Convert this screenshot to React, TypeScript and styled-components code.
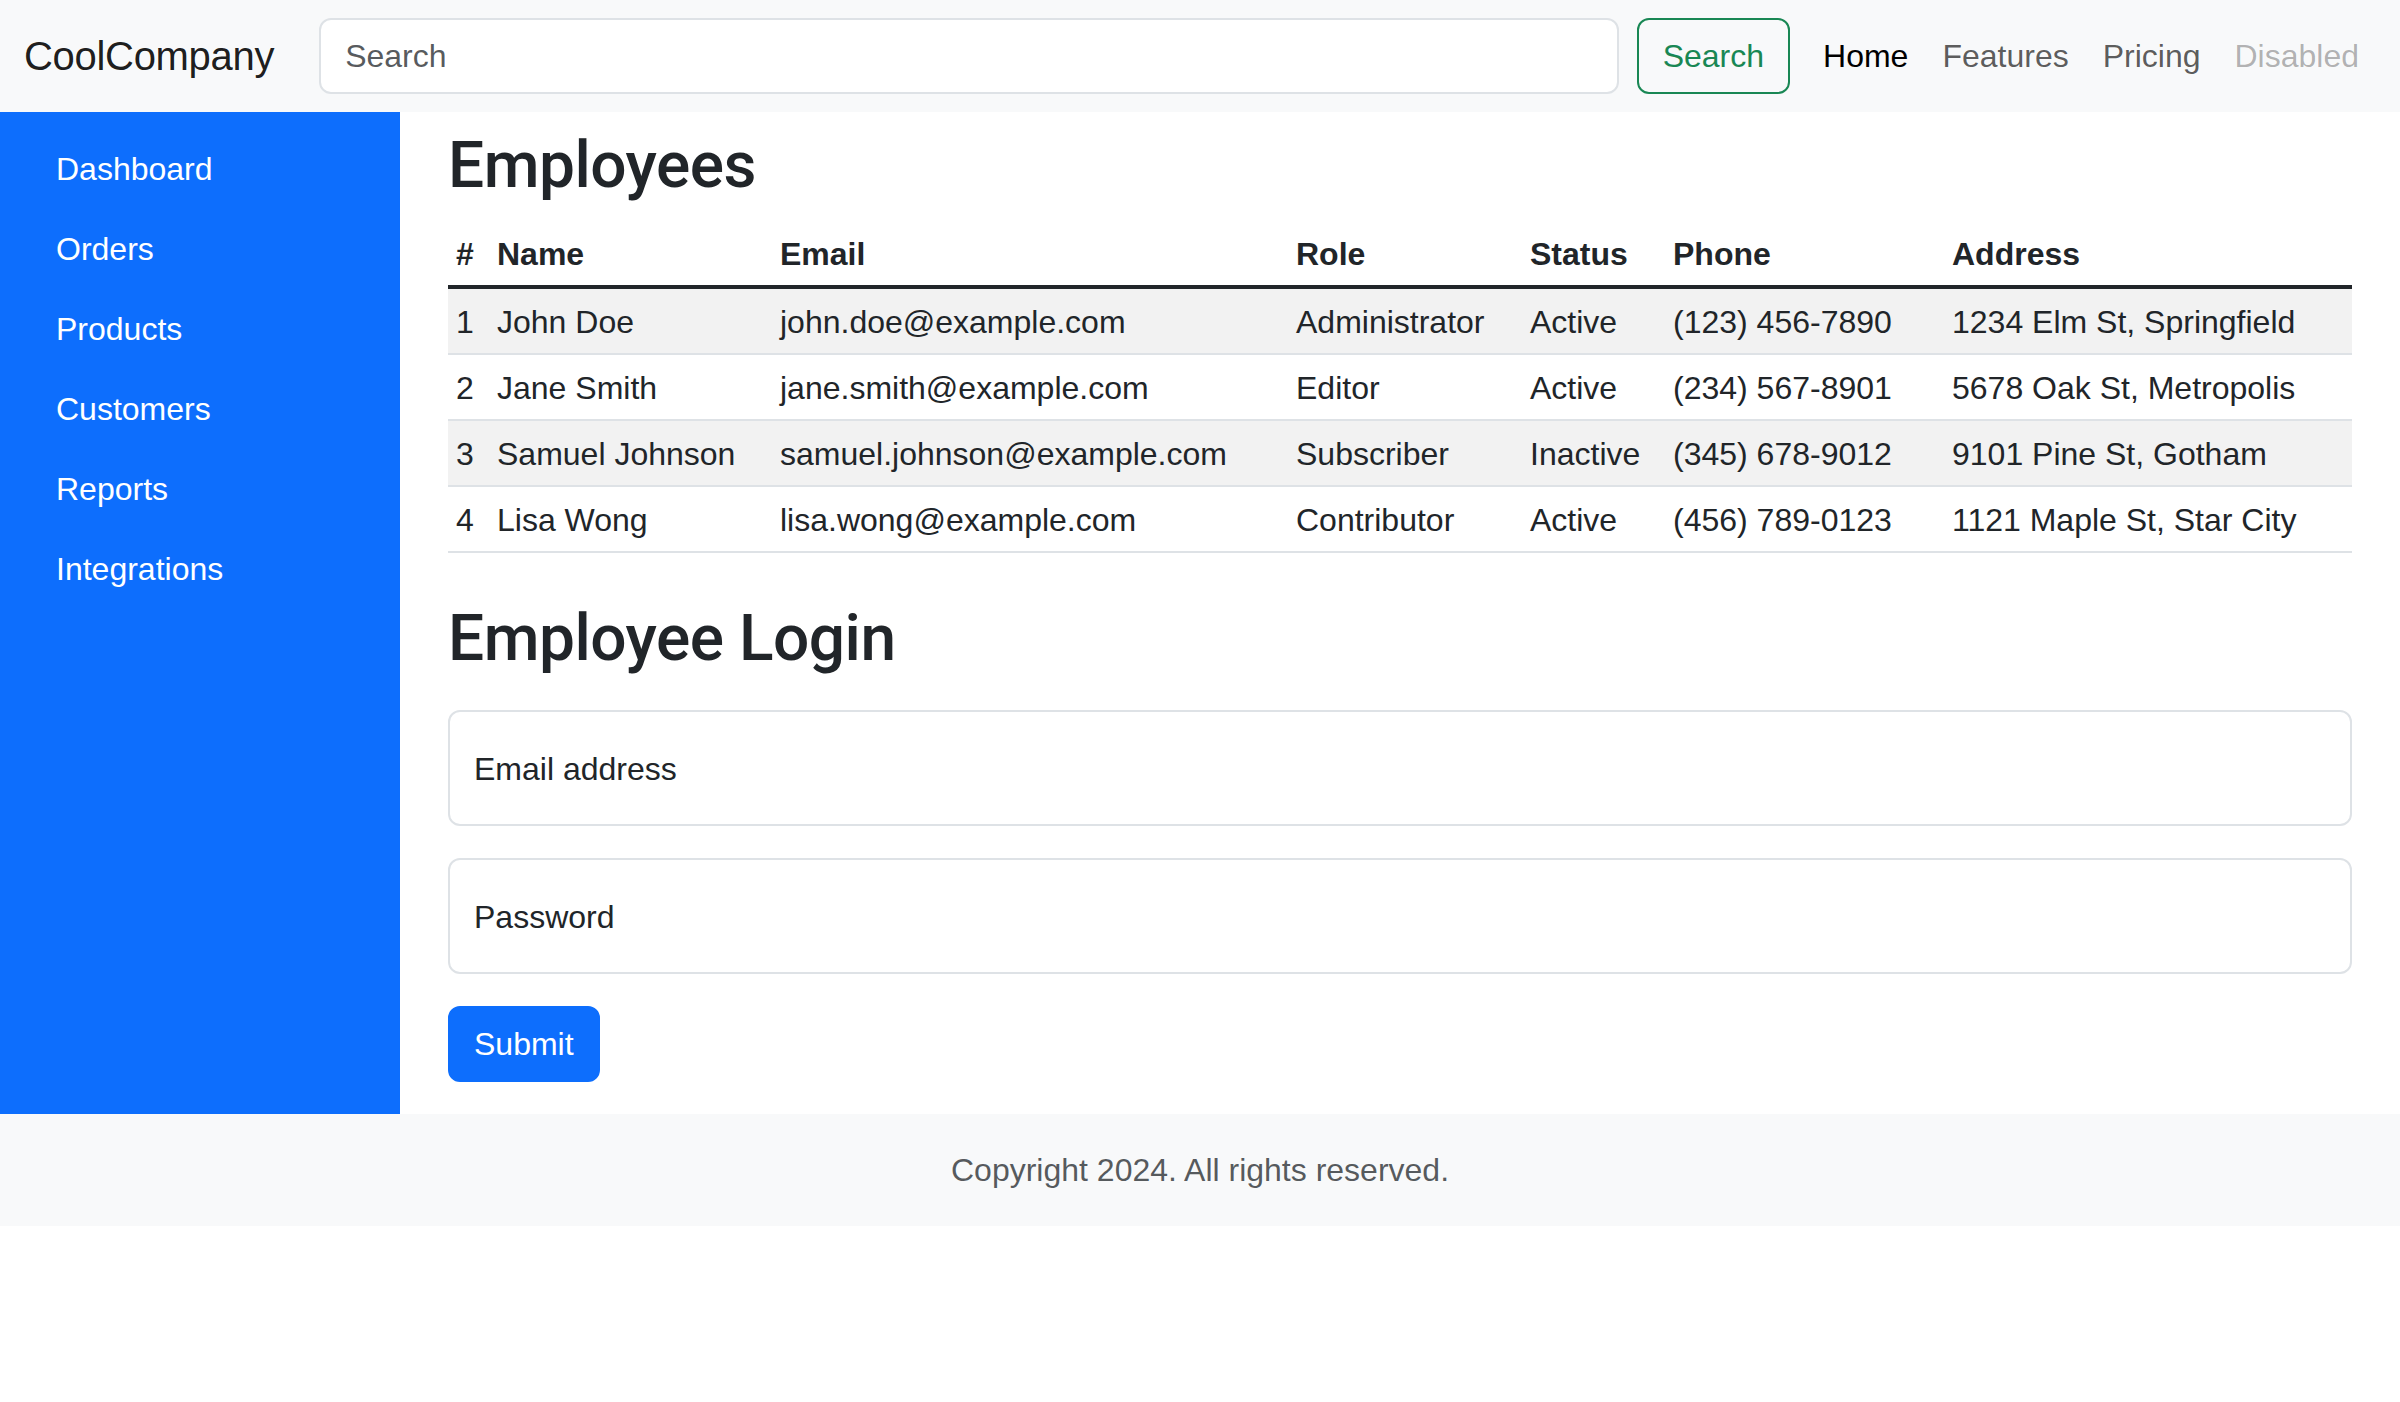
import styled, { createGlobalStyle } from "styled-components";

const GlobalStyle = createGlobalStyle`
  *, *::before, *::after {
    box-sizing: border-box;
  }
  body {
    margin: 0;
    font-family: "Liberation Sans", Arial, sans-serif;
    font-size: 32px;
    line-height: 1.5;
    color: #212529;
    background-color: #fff;
  }
`;

interface IEmployee {
  id: number;
  name: string;
  email: string;
  role: string;
  status: string;
  phone: string;
  address: string;
}

const employees: IEmployee[] = [
  {
    id: 1,
    name: "John Doe",
    email: "john.doe@example.com",
    role: "Administrator",
    status: "Active",
    phone: "(123) 456-7890",
    address: "1234 Elm St, Springfield",
  },
  {
    id: 2,
    name: "Jane Smith",
    email: "jane.smith@example.com",
    role: "Editor",
    status: "Active",
    phone: "(234) 567-8901",
    address: "5678 Oak St, Metropolis",
  },
  {
    id: 3,
    name: "Samuel Johnson",
    email: "samuel.johnson@example.com",
    role: "Subscriber",
    status: "Inactive",
    phone: "(345) 678-9012",
    address: "9101 Pine St, Gotham",
  },
  {
    id: 4,
    name: "Lisa Wong",
    email: "lisa.wong@example.com",
    role: "Contributor",
    status: "Active",
    phone: "(456) 789-0123",
    address: "1121 Maple St, Star City",
  },
];

// column widths follow the reference layout
const columns = [
  { label: "#", width: 41 },
  { label: "Name", width: 283 },
  { label: "Email", width: 516 },
  { label: "Role", width: 234 },
  { label: "Status", width: 143 },
  { label: "Phone", width: 279 },
  { label: "Address", width: 408 },
];

const sideLinks = [
  "Dashboard",
  "Orders",
  "Products",
  "Customers",
  "Reports",
  "Integrations",
];

type LinkState = "active" | "normal" | "disabled";

const navLinks: { label: string; state: LinkState }[] = [
  { label: "Home", state: "active" },
  { label: "Features", state: "normal" },
  { label: "Pricing", state: "normal" },
  { label: "Disabled", state: "disabled" },
];

const Page = styled.div`
  display: flex;
  flex-direction: column;
`;

const Navbar = styled.nav`
  display: flex;
  align-items: center;
  height: 112px;
  padding: 0 24px 0 24px;
  background-color: #f8f9fa;
`;

const Brand = styled.a`
  font-size: 40px;
  line-height: 60px;
  padding: 10px 0;
  margin-right: 45px;
  color: rgba(0, 0, 0, 0.9);
  text-decoration: none;
  white-space: nowrap;
  letter-spacing: -0.3px;
`;

const SearchForm = styled.form`
  display: flex;
  flex: 1;
  margin: 0 16px 0 0;
`;

const SearchInput = styled.input`
  flex: 1;
  min-width: 0;
  height: 76px;
  margin-right: 18px;
  padding: 12px 24px;
  font-family: inherit;
  font-size: 32px;
  color: #212529;
  background-color: #fff;
  border: 2px solid #dee2e6;
  border-radius: 12px;
  outline: none;

  &::placeholder {
    color: rgba(33, 37, 41, 0.75);
  }
`;

const OutlineButton = styled.button`
  height: 76px;
  padding: 12px 24px;
  font-family: inherit;
  font-size: 32px;
  line-height: 48px;
  color: #198754;
  background: transparent;
  border: 2px solid #198754;
  border-radius: 12px;
  cursor: pointer;
`;

const NavList = styled.ul`
  display: flex;
  margin: 0;
  padding: 0;
  list-style: none;
`;

const NavLink = styled.a<{ $state: LinkState }>`
  display: block;
  padding: 16px 17px;
  line-height: 48px;
  text-decoration: none;
  color: ${(p) =>
    p.$state === "active"
      ? "rgba(0, 0, 0, 1)"
      : p.$state === "disabled"
      ? "rgba(0, 0, 0, 0.3)"
      : "rgba(0, 0, 0, 0.65)"};
`;

const Body = styled.div`
  display: flex;
`;

const Sidebar = styled.aside`
  width: 400px;
  flex-shrink: 0;
  padding: 16px 24px;
  background-color: #0d6efd;
`;

const SideNav = styled.ul`
  display: flex;
  flex-direction: column;
  margin: 0;
  padding: 0;
  list-style: none;
`;

const SideLink = styled.a`
  display: block;
  padding: 17px 32px 15px;
  line-height: 48px;
  color: #fff;
  text-decoration: none;
`;

const Main = styled.main`
  flex: 1;
  min-width: 0;
  padding: 16px 48px 32px;
`;

const Title = styled.h2<{ $top?: number; $bottom?: number }>`
  margin: ${(p) => p.$top ?? 0}px 0 ${(p) => p.$bottom ?? 16}px;
  font-family: Roboto, "Liberation Sans", sans-serif;
  font-weight: 500;
  font-size: 64px;
  line-height: 1.2;
  letter-spacing: -0.5px;
  color: #212529;
`;

const Table = styled.table`
  width: 100%;
  margin-bottom: 32px;
  border-collapse: collapse;
  table-layout: fixed;
`;

const Col = styled.col<{ $width: number }>`
  width: ${(p) => p.$width}px;
`;

const Th = styled.th`
  padding: 9px 8px 7px;
  text-align: left;
  font-weight: 700;
  line-height: 48px;
  white-space: nowrap;
  border-bottom: 4px solid #212529;
`;

const Row = styled.tr<{ $striped: boolean }>`
  background-color: ${(p) => (p.$striped ? "#f2f2f2" : "#fff")};
`;

const Td = styled.td`
  padding: 9px 8px 7px;
  line-height: 48px;
  white-space: nowrap;
  border-bottom: 2px solid #dee2e6;
`;

const LoginForm = styled.form`
  display: flex;
  flex-direction: column;
  align-items: flex-start;
`;

const FloatingField = styled.div`
  position: relative;
  width: 100%;
  margin-bottom: 32px;
`;

const FieldInput = styled.input`
  display: block;
  width: 100%;
  height: 116px;
  padding: 32px 24px;
  font-family: inherit;
  font-size: 32px;
  color: #212529;
  background-color: #fff;
  border: 2px solid #dee2e6;
  border-radius: 12px;
  outline: none;
`;

const FieldLabel = styled.label`
  position: absolute;
  top: 0;
  left: 0;
  padding: 35px 26px 33px;
  line-height: 48px;
  color: #212529;
  pointer-events: none;
`;

const SubmitButton = styled.button`
  padding: 12px 24px;
  font-family: inherit;
  font-size: 32px;
  line-height: 48px;
  color: #fff;
  background-color: #0d6efd;
  border: 2px solid #0d6efd;
  border-radius: 12px;
  cursor: pointer;
`;

const Footer = styled.footer`
  padding: 32px 0;
  line-height: 48px;
  text-align: center;
  color: rgba(33, 37, 41, 0.75);
  background-color: #f8f9fa;
`;

function App() {
  return (
    <>
      <GlobalStyle />
      <Page>
        <Navbar>
          <Brand href="#">CoolCompany</Brand>
          <SearchForm onSubmit={(e) => e.preventDefault()}>
            <SearchInput type="search" placeholder="Search" />
            <OutlineButton type="submit">Search</OutlineButton>
          </SearchForm>
          <NavList>
            {navLinks.map((link) => (
              <li key={link.label}>
                <NavLink href="#" $state={link.state}>
                  {link.label}
                </NavLink>
              </li>
            ))}
          </NavList>
        </Navbar>

        <Body>
          <Sidebar>
            <SideNav>
              {sideLinks.map((label) => (
                <li key={label}>
                  <SideLink href="#">{label}</SideLink>
                </li>
              ))}
            </SideNav>
          </Sidebar>

          <Main>
            <Title>Employees</Title>
            <Table>
              <colgroup>
                {columns.map((c) => (
                  <Col key={c.label} $width={c.width} />
                ))}
              </colgroup>
              <thead>
                <tr>
                  {columns.map((c) => (
                    <Th key={c.label}>{c.label}</Th>
                  ))}
                </tr>
              </thead>
              <tbody>
                {employees.map((emp, i) => (
                  <Row key={emp.id} $striped={i % 2 === 0}>
                    <Td>{emp.id}</Td>
                    <Td>{emp.name}</Td>
                    <Td>{emp.email}</Td>
                    <Td>{emp.role}</Td>
                    <Td>{emp.status}</Td>
                    <Td>{emp.phone}</Td>
                    <Td>{emp.address}</Td>
                  </Row>
                ))}
              </tbody>
            </Table>

            <Title $top={48} $bottom={32}>
              Employee Login
            </Title>
            <LoginForm onSubmit={(e) => e.preventDefault()}>
              <FloatingField>
                <FieldInput type="email" id="email" />
                <FieldLabel htmlFor="email">Email address</FieldLabel>
              </FloatingField>
              <FloatingField>
                <FieldInput type="password" id="password" />
                <FieldLabel htmlFor="password">Password</FieldLabel>
              </FloatingField>
              <SubmitButton type="submit">Submit</SubmitButton>
            </LoginForm>
          </Main>
        </Body>

        <Footer>Copyright 2024. All rights reserved.</Footer>
      </Page>
    </>
  );
}

export default App;
